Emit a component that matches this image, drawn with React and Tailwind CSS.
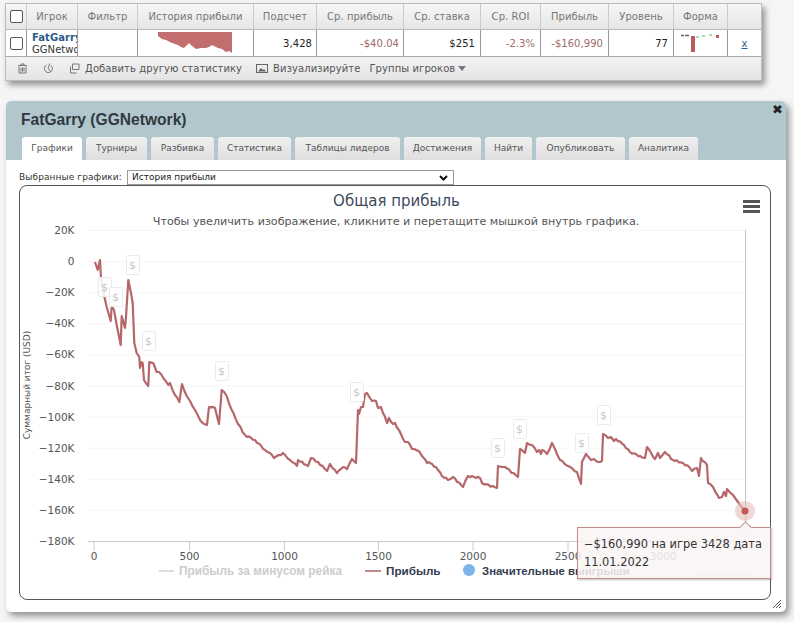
import React from 'react'

const F = '[font-family:"DejaVu_Sans",sans-serif]'

const columns = [
    { label: 'Игрок', w: 'w-[51px]' },
    { label: 'Фильтр', w: 'w-[60px]' },
    { label: 'История прибыли', w: 'w-[116px]' },
    { label: 'Подсчет', w: 'w-[63px]' },
    { label: 'Ср. прибыль', w: 'w-[87px]' },
    { label: 'Ср. ставка', w: 'w-[77px]' },
    { label: 'Ср. ROI', w: 'w-[60px]' },
    { label: 'Прибыль', w: 'w-[68px]' },
    { label: 'Уровень', w: 'w-[65px]' },
    { label: 'Форма', w: 'w-[54px]' },
    { label: '', w: 'flex-1' },
]

const tabs = [
    { label: 'Графики', w: 'w-[60px]', active: true },
    { label: 'Турниры', w: 'w-[61px]' },
    { label: 'Разбивка', w: 'w-[63px]' },
    { label: 'Статистика', w: 'w-[73px]' },
    { label: 'Таблицы лидеров', w: 'w-[105px]' },
    { label: 'Достижения', w: 'w-[77px]' },
    { label: 'Найти', w: 'w-[47px]' },
    { label: 'Опубликовать', w: 'w-[89px]' },
    { label: 'Аналитика', w: 'w-[69px]' },
]

// traced by hand, page coordinates
const traced = [
    [95, 262], [97.7, 270], [100, 260], [101, 278], [104, 295], [106.7, 307], [110.7, 321], [111.7, 306], [114, 310], [116.7, 325],
    [120.7, 345], [121.7, 316], [125, 328], [126, 317], [128.3, 280], [131, 293], [132.7, 303], [134.3, 343], [136.7, 353], [139.3, 357],
    [140, 368], [141.7, 362], [142.7, 363], [144, 380], [148.3, 386], [149.3, 362], [153.3, 363], [156.7, 372], [159, 372], [163.3, 378],
    [168.3, 385], [170, 383], [175, 395], [179.3, 402], [182, 384], [186.7, 396], [190, 401], [195, 410], [200, 420], [204, 424], [207, 425],
    [209, 407], [215, 408], [219, 424], [221.7, 390], [226.7, 396], [231.7, 410], [238, 424], [245, 435], [255, 440], [265, 450], [270, 453],
    [274, 458], [283, 453], [290, 460], [297, 466], [298, 460], [308, 466], [311, 458], [318, 462], [327, 471], [330, 464], [337, 473], [343, 467],
    [347, 469], [352, 459], [356, 463], [358, 410], [359, 414], [361, 407], [363, 407], [365, 394], [367, 393], [372, 401], [376, 401], [378, 408],
    [381, 407], [387, 423], [389, 418], [393, 424], [395, 423], [405, 442], [408, 442], [412, 449], [419, 451], [427, 463], [428, 462], [436, 467],
    [442, 476], [448, 480], [453, 477], [463, 487], [468, 476], [480, 478], [482, 483], [497, 488], [498, 466], [505, 467], [518, 477], [520, 449],
    [525, 453], [527, 443], [532, 445], [537, 452], [539, 450], [541, 454], [542, 450], [547, 454], [552, 443], [555, 449], [560, 460], [568, 466],
    [577, 472], [581, 484], [582, 462], [586, 454], [591, 460], [594, 459], [598, 462], [602, 461], [603, 434], [608, 438], [611, 437], [614, 441],
    [616, 439], [624, 445], [630, 452], [640, 456], [645, 458], [647, 447], [655, 459], [658, 453], [660, 458], [665, 452], [673, 460], [683, 463],
    [690, 468], [692, 471], [697, 468], [699, 476], [701, 458], [707, 465], [708, 483], [713, 487], [719, 498], [722, 497], [724, 492], [726, 496],
    [727, 489], [733, 495], [738, 502], [745, 512],
]

// long segments get a small wobble, the real series is noisy
const profit = traced.flatMap((p, i) => {
    const next = traced[i + 1]
    if (!next || next[0] - p[0] < 4) return [p]
    const steps = Math.floor((next[0] - p[0]) / 2)
    const extra = []
    for (let s = 1; s < steps; s++) {
        const t = s / steps
        const wobble = Math.sin(p[0] * 3.1 + s * 2.3) * 0.9
        extra.push([p[0] + (next[0] - p[0]) * t, p[1] + (next[1] - p[1]) * t + wobble])
    }
    return [p, ...extra]
})

const flags = [
    [98, 277], [109, 287], [126, 255], [142, 331], [215, 361], [350, 382], [491, 438], [513, 419], [575, 433], [597, 405],
]

const yLabels = ['20K', '0', '−20K', '−40K', '−60K', '−80K', '−100K', '−120K', '−140K', '−160K', '−180K']
const xLabels = [[94, '0'], [189.5, '500'], [284.5, '1000'], [378.5, '1500'], [473, '2000'], [568, '2500'], [663, '3000']]

const IconTrash = () => (
    <svg width="11" height="11" viewBox="0 0 11 11" fill="none" stroke="#777" strokeWidth="1">
        <path d="M1 2.5h9M4 2.5v-1.500h3v1.500M2 3.500v6.500h7v-6.500M4 4.500v4M5.500 4.500v4M7 4.500v4" />
    </svg>
)

const IconRefresh = () => (
    <svg width="11" height="11" viewBox="0 0 11 11" fill="none" stroke="#777" strokeWidth="1">
        <path d="M3.500 2a4 4 0 1 0 4.500 0.500M7 0.500L5 5M5 5l3 4" />
    </svg>
)

const IconCopy = () => (
    <svg width="11" height="11" viewBox="0 0 11 11" fill="none" stroke="#777" strokeWidth="1">
        <path d="M3.500 1h6.500v5.500h-6.500zM1.500 3.500v6.500h6" />
    </svg>
)

const IconImage = () => (
    <svg width="12" height="11" viewBox="0 0 12 11" fill="none" stroke="#666" strokeWidth="1">
        <rect x="0.500" y="1.500" width="11" height="8" />
        <path d="M2 8.500l3-3.500 2 2 1-1 2 2.500z" fill="#666" stroke="none" />
    </svg>
)

const Sparkline = () => (
    <svg width="116" height="26" viewBox="0 0 116 26">
        <path
            d="M20 2H94V23L91 21L88 22L84 19L80 18L76 16L74 15L71 17L68 18L63 18L58 19L54 16L51 13L48 16L46 18L43 17L40 15L34 13L28 10L24 9L20 6Z"
            fill="#c26e6e"
        />
    </svg>
)

const FormChart = () => (
    <svg width="54" height="26" viewBox="0 0 54 26">
        <rect x="17" y="6" width="4" height="16" fill="#b75c5c" />
        <path d="M7 5.500h3M11 5.500h4" stroke="#666" strokeWidth="1.500" />
        <path d="M22 7h3M28 6h3M35 5h3" stroke="#a8dba8" strokeWidth="2" />
        <rect x="42" y="5" width="3" height="3" fill="#b75c5c" />
    </svg>
)

const Chart = () => (
    <svg viewBox="20 186 750 413" className="block w-full h-full">
        {yLabels.map((label, i) => (
            <g key={label}>
                <line x1="88" x2="745" y1={230.5 + i * 31.1} y2={230.5 + i * 31.1} stroke={i === 10 ? '#c8c8c8' : '#f6f6f6'} />
                <text x="74.500" y={234 + i * 31.1} textAnchor="end" fontSize="10.500" fill="#555">{label}</text>
            </g>
        ))}
        {xLabels.map(([x, label]) => (
            <g key={label}>
                <line x1={x} x2={x} y1="541" y2="551" stroke="#ccc" />
                <text x={x} y="560" textAnchor="middle" fontSize="10.500" fill="#555">{label}</text>
            </g>
        ))}
        <line x1="745.500" x2="745.500" y1="230" y2="541" stroke="#c4c4c4" />

        <text x="396.500" y="206" textAnchor="middle" fontSize="15" fill="#3e4a5e">Общая прибыль</text>
        <text x="396" y="225" textAnchor="middle" fontSize="11.150" fill="#555">Чтобы увеличить изображение, кликните и перетащите мышкой внутрь графика.</text>
        <text transform="translate(30 385) rotate(-90)" textAnchor="middle" fontSize="9" fill="#555">Суммарный итог (USD)</text>

        <polyline
            points={profit.map((p) => p.join(',')).join(' ')}
            fill="none"
            stroke="#b5676a"
            strokeWidth="2.200"
            strokeLinejoin="round"
        />

        {flags.map(([x, y]) => (
            <g key={x}>
                <rect x={x + 0.5} y={y + 0.5} width="13" height="19" rx="1" fill="#fff" fillOpacity="0.85" stroke="#e6ecef" />
                <text x={x + 6.5} y={y + 14} textAnchor="middle" fontSize="11" fill="#c8c8c8">$</text>
            </g>
        ))}

        <circle cx="745" cy="511" r="10" fill="#e9bcbc" fillOpacity="0.6" />
        <circle cx="745" cy="511" r="3.500" fill="#c0585c" />

        <line x1="159" x2="174" y1="571" y2="571" stroke="#ddd" strokeWidth="2" />
        <text x="179" y="575" fontSize="11.850" fontWeight="700" fill="#ccc" fontFamily="Liberation Sans">Прибыль за минусом рейка</text>
        <line x1="365" x2="381" y1="571" y2="571" stroke="#c08a8a" strokeWidth="2" />
        <text x="386" y="575" fontSize="11.700" fontWeight="700" fill="#333c4e" fontFamily="Liberation Sans">Прибыль</text>
        <circle cx="469" cy="570" r="6" fill="#7cb5ec" />
        <text x="482" y="575" fontSize="11.400" fontWeight="700" fill="#333c4e" fontFamily="Liberation Sans">Значительные выигрыши</text>
        <text x="724" y="577" textAnchor="middle" fontSize="9" fill="#ccc">Номер игры</text>

        <g fill="#555">
            <rect x="743" y="200" width="17" height="3" />
            <rect x="743" y="205" width="17" height="3" />
            <rect x="743" y="210" width="17" height="3" />
        </g>
    </svg>
)

const App = () => {
    return (
        <div className={`w-[794px] h-[622px] overflow-hidden bg-[#f4f5f5] pt-[3px] ${F}`}>
            {/* Selected players table */}
            <div className="ml-[5px] w-[757px] border border-[#bdbdbd] bg-white shadow-[3px_4px_6px_rgba(0,0,0,0.4)]">
                <div className="flex h-[26px] bg-gradient-to-b from-[#f6f6f6] to-[#e6e6e6] border-b border-[#bbb]">
                    <div className="w-[21px] flex items-center justify-center border-r border-[#ccc]">
                        <span className="w-[13px] h-[13px] rounded-[2px] border border-[#555] bg-white" />
                    </div>
                    {columns.map((col) => (
                        <div key={col.label} className={`${col.w} flex items-center justify-center border-r last:border-r-0 border-[#ccc] text-[10px] tracking-[0.05px] text-[#777]`}>
                            {col.label}
                        </div>
                    ))}
                </div>
                <div className="flex h-[27px] text-[10px] tracking-[0.05px] border-b border-[#aaa]">
                    <div className="w-[21px] flex items-center justify-center border-r border-[#999]">
                        <span className="w-[13px] h-[13px] rounded-[2px] border border-[#555] bg-white" />
                    </div>
                    <div className="w-[51px] overflow-hidden border-r border-[#999] pl-[5px] leading-[12px] pt-[2px] whitespace-nowrap">
                        <div className="font-bold text-[#2d5a8a]">FatGarry</div>
                        <div className="text-[#333]">GGNetwork</div>
                    </div>
                    <div className="w-[60px] border-r border-[#999]" />
                    <div className="w-[116px] border-r border-[#999]"><Sparkline /></div>
                    <div className="w-[63px] border-r border-[#999] flex items-center justify-end pr-[4px] text-[#222]">3,428</div>
                    <div className="w-[87px] border-r border-[#999] flex items-center justify-end pr-[4px] text-[#a06a6a]">-$40.04</div>
                    <div className="w-[77px] border-r border-[#999] flex items-center justify-end pr-[5px] text-[#222]">$251</div>
                    <div className="w-[60px] border-r border-[#999] flex items-center justify-end pr-[5px] text-[#a06a6a]">-2.3%</div>
                    <div className="w-[68px] border-r border-[#999] flex items-center justify-end pr-[5px] text-[#a06a6a]">-$160,990</div>
                    <div className="w-[65px] border-r border-[#999] flex items-center justify-end pr-[5px] text-[#222]">77</div>
                    <div className="w-[54px] border-r border-[#999]"><FormChart /></div>
                    <div className="flex-1 flex items-center justify-center text-[#2d5a8a] underline">x</div>
                </div>
                <div className="flex items-center h-[23px] bg-gradient-to-b from-[#f3f3f3] to-[#e4e4e4] text-[10px] tracking-[0.08px] text-[#555]">
                    <span className="ml-[11px]"><IconTrash /></span>
                    <span className="ml-[15px]"><IconRefresh /></span>
                    <span className="ml-[15px] mr-[5px]"><IconCopy /></span>
                    <span>Добавить другую статистику</span>
                    <span className="ml-[14px] mr-[5px]"><IconImage /></span>
                    <span>Визуализируйте</span>
                    <span className="ml-[9px]">Группы игроков</span>
                    <span className="ml-[3px] w-0 h-0 border-x-[4px] border-x-transparent border-t-[5px] border-t-[#777]" />
                </div>
            </div>

            {/* Player dialog */}
            <div className="relative ml-[6px] mt-[20px] w-[780px] h-[511px] rounded-[5px] bg-white shadow-[3px_4px_6px_rgba(0,0,0,0.4)]">
                <div className="relative h-[59px] rounded-t-[5px] bg-[#b2c7cd] pt-[9px] pl-[15px]">
                    <div className="text-[15.600px] leading-[19px] font-bold text-[#2f3a40] [font-family:'Liberation_Sans',sans-serif]">FatGarry (GGNetwork)</div>
                    <span className="absolute right-[3px] top-[2px] text-[13px] leading-[14px] font-bold text-[#222]">✖</span>
                    <div className="flex gap-[4px] ml-[1px] mt-[8px]">
                        {tabs.map((tab) => (
                            <div
                                key={tab.label}
                                className={`${tab.w} h-[23px] rounded-t-[3px] flex items-center justify-center text-[9px] text-[#555] ${tab.active ? 'bg-white' : 'bg-gradient-to-b from-[#f0f0f0] to-[#dedede]'}`}
                            >
                                {tab.label}
                            </div>
                        ))}
                    </div>
                </div>
                <div className="px-[13px]">
                    <div className="flex items-center h-[15px] mt-[10px] text-[9px] text-[#333]">
                        <span className="w-[108px] shrink-0 whitespace-nowrap tracking-[0.1px]">Выбранные графики:</span>
                        <div className="flex items-center justify-between w-[327px] h-[15px] border border-[#999] bg-white px-[4px] text-[#222]">
                            <span>История прибыли</span>
                            <svg width="9" height="6" viewBox="0 0 9 6" className="mr-[1px]">
                                <path d="M1 1l3.500 3.500L8 1" fill="none" stroke="#111" strokeWidth="2" />
                            </svg>
                        </div>
                    </div>
                    <div className="relative w-[752px] h-[415px] rounded-[8px] border border-[#555] bg-white">
                        <Chart />
                        {/* Tooltip */}
                        <div className="absolute left-[557px] top-[341px] w-[194px] h-[52px] border border-[#c08a8a] bg-[#f9f5f5]/85 shadow-[1px_1px_2px_rgba(0,0,0,0.25)] pl-[6px] pt-[7px] text-[11.400px] leading-[18px] text-[#333]">
                            <div>−$160,990 на игре 3428 дата</div>
                            <div>11.01.2022</div>
                            <span className="absolute left-[163px] -top-[5px] w-[9px] h-[9px] rotate-45 border-l border-t border-[#c08a8a] bg-[#f9f5f5]" />
                        </div>
                    </div>
                </div>
                {/* Resize grip */}
                <svg width="10" height="10" viewBox="0 0 10 10" className="absolute right-[4px] bottom-[3px]">
                    <path d="M1 9L9 1M4 9L9 4M7 9L9 7" stroke="#555" strokeWidth="1" />
                </svg>
            </div>
        </div>
    )
}

export default App
